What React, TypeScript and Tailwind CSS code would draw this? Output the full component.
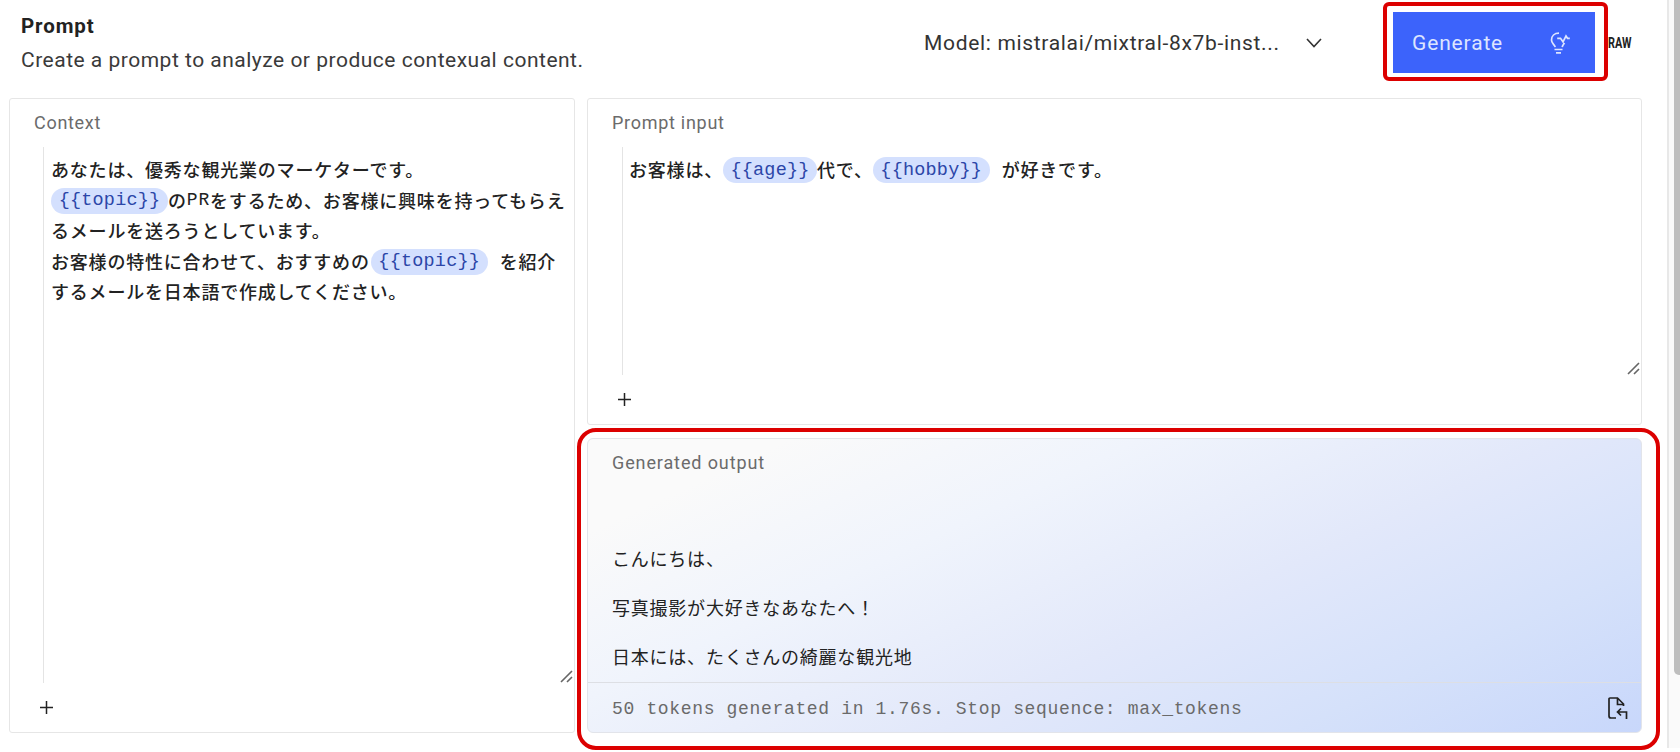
import React from "react";

const JP = "font-['Noto_Sans_CJK_JP',sans-serif]";

function Token({ name, className }: { name: string; className: string }) {
  return (
    <span
      className={`mt-[2px] inline-flex h-[26px] items-center justify-center rounded-full bg-[#d4e0fe] pt-px font-['Liberation_Mono','Noto_Sans_CJK_JP',monospace] text-[18.5px] leading-none tracking-[0.2px] text-[#2c46a8] ${className}`}
    >
      {`{{${name}}}`}
    </span>
  );
}

function Plus({ className }: { className: string }) {
  return (
    <svg className={className} width="13" height="13" viewBox="0 0 13 13" stroke="#222" strokeWidth="1.5">
      <path d="M6.500 0v13M0 6.500h13" />
    </svg>
  );
}

function Grip() {
  return (
    <svg className="absolute right-px bottom-0" width="13" height="13" viewBox="0 0 13 13" stroke="#666" strokeWidth="1.6">
      <path d="M1 12L12 1M7 12L12 7" />
    </svg>
  );
}

export default function App() {
  return (
    <div className="relative flex h-[752px] w-[1680px] overflow-hidden bg-white font-['Roboto','Noto_Sans_CJK_JP',sans-serif] text-[#222]">
      <main className="flex w-[1667px] flex-col pl-[9px]">
        <header className="flex h-[98px] w-[1633px] shrink-0">
          <div className="w-[915px] pt-[11px] pl-3 whitespace-nowrap">
            <h1 className="text-[20.5px] leading-[30px] font-bold tracking-[0.9px]">Prompt</h1>
            <p className="mt-[3px] text-[21px] leading-[32px] tracking-[0.5px] text-[#3a3a3a]">
              Create a prompt to analyze or produce contexual content.
            </p>
          </div>
          <div className="flex h-[86px] w-[469px] items-center whitespace-nowrap">
            <span className="w-[382px] pt-[2px] text-[21px] tracking-[0.67px] text-[#333]">Model: mistralai/mixtral-8x7b-inst...</span>
            <svg width="16" height="10" viewBox="0 0 16 10" fill="none" stroke="#333" strokeWidth="1.6">
              <path d="M1 1l7 7.500L15 1" />
            </svg>
          </div>
          <button className="mt-3 flex h-[61px] w-[202px] items-center justify-between bg-[#3c63fb] pr-[25px] pl-[19px] text-[#dde5ff]">
            <span className="pt-[2px] text-[21px] tracking-[0.85px]">Generate</span>
            <svg width="20" height="22" viewBox="0 0 20 22" fill="none" stroke="currentColor" strokeWidth="1.7">
              <path d="M9 1.200C4.500 1.200 1.500 4 1.500 8c0 3.700 3.200 4.500 3.700 7.200M14.500 11c-1 1.500-2 2.300-2.300 4.200M4.500 17.500h8M6 20.800h5M7.200 6.300h3.300l2.500 3.500L16 4l1.500 2.300H19.800" />
            </svg>
          </button>
          <span className="mt-[35px] ml-[13px] origin-left scale-x-[0.7] text-[15.5px] leading-[16px] font-bold">
            RAW
          </span>
        </header>

        <div className="flex gap-3">
          <section className="flex h-[635px] w-[566px] flex-col rounded-[3px] border border-[#e6e6e6]">
            <h2 className="h-12 pt-[11px] pl-6 text-[18px] leading-[26px] tracking-[0.7px] text-[#6b6b6b]">Context</h2>
            <div className={`relative ml-[33px] h-[536px] border-l border-[#e4e4e4] pt-[7px] pl-[7px] text-[18px] leading-[30.6px] font-medium tracking-[0.8px] whitespace-nowrap ${JP}`}>
              <p className="h-[30.6px]">あなたは、優秀な観光業のマーケターです。</p>
              <p className="flex h-[30.6px] items-center"><Token name="topic" className="w-[117px]" />の<span className="font-['Liberation_Mono',monospace] font-normal">PR</span>をするため、お客様に興味を持ってもらえ</p>
              <p className="h-[30.6px]">るメールを送ろうとしています。</p>
              <p className="flex h-[30.6px] items-center">お客様の特性に合わせて、おすすめの<Token name="topic" className="mr-[12px] ml-px w-[117px]" />を紹介</p>
              <p className="h-[30.6px]">するメールを日本語で作成してください。</p>
              <Grip />
            </div>
            <Plus className="mt-[18px] ml-[30px]" />
          </section>

          <div className="flex w-[1055px] flex-col gap-[13px]">
            <section className="flex h-[327px] flex-col rounded-[3px] border border-[#e6e6e6]">
              <h2 className="h-12 pt-[11px] pl-6 text-[18px] leading-[26px] tracking-[0.72px] text-[#6b6b6b]">Prompt input</h2>
              <div className={`relative ml-[34px] h-[228px] border-l border-[#e4e4e4] pt-[7px] pl-[6px] text-[18px] leading-[30.6px] font-medium tracking-[0.8px] whitespace-nowrap ${JP}`}>
                <p className="flex h-[30.6px] items-center">お客様は、<Token name="age" className="w-[94px]" />代で、<Token name="hobby" className="mr-[12px] w-[117px]" />が好きです。</p>
                <Grip />
              </div>
              <Plus className="mt-[18px] ml-[30px]" />
            </section>

            <section className="flex h-[295px] flex-col rounded-[6px] border border-[#e2e4ea] bg-[linear-gradient(155deg,#fafafa_12%,#f0f4fc_33%,#e2e8fa_58%,#d5e1fa_79%,#c8d7fb_100%)]">
              <h2 className="h-[100px] pt-[11px] pl-6 text-[18px] leading-[26px] tracking-[0.88px] text-[#6b6b6b]">Generated output</h2>
              <div className={`h-[144px] border-b border-[#dddfe4] pl-6 text-[18px] tracking-[0.78px] ${JP}`}>
                <p className="h-[48.8px] leading-[38px]">こんにちは、</p>
                <p className="h-[48.8px] leading-[38px]">写真撮影が大好きなあなたへ！</p>
                <p className="h-[42px] leading-[38px]">日本には、たくさんの綺麗な観光地</p>
              </div>
              <div className="flex h-[49px] items-center justify-between pr-[13px] pl-6">
                <span className="pt-[3px] font-['Liberation_Mono',monospace] text-[18px] tracking-[0.66px] text-[#6a6a6a]">50 tokens generated in 1.76s. Stop sequence: max_tokens</span>
                <svg width="20" height="22" viewBox="0 0 20 22" fill="none" stroke="#222" strokeWidth="1.7">
                  <path d="M8 21H3a2 2 0 0 1-2-2V2a1 1 0 0 1 1-1h7.500l6 6v2M9.500 1v6.500H15.500M18.500 22v-7H10M13 11.500L9.500 15l3.500 3.500" />
                </svg>
              </div>
            </section>
          </div>
        </div>
      </main>

      <div className="flex h-[748px] w-[13px] justify-end border-l-2 border-[#e8e8e8] bg-[#fafafa]">
        <div className="h-[675px] w-[6px] rounded-bl-[5px] bg-[#bebebe]" />
      </div>

      <div className="absolute top-[2px] left-[1383px] h-[79px] w-[225px] rounded-[6px] border-4 border-[#dc0000]" />
      <div className="absolute top-[428px] left-[577px] h-[322px] w-[1083px] rounded-[19px] border-4 border-[#dc0000]" />
    </div>
  );
}
